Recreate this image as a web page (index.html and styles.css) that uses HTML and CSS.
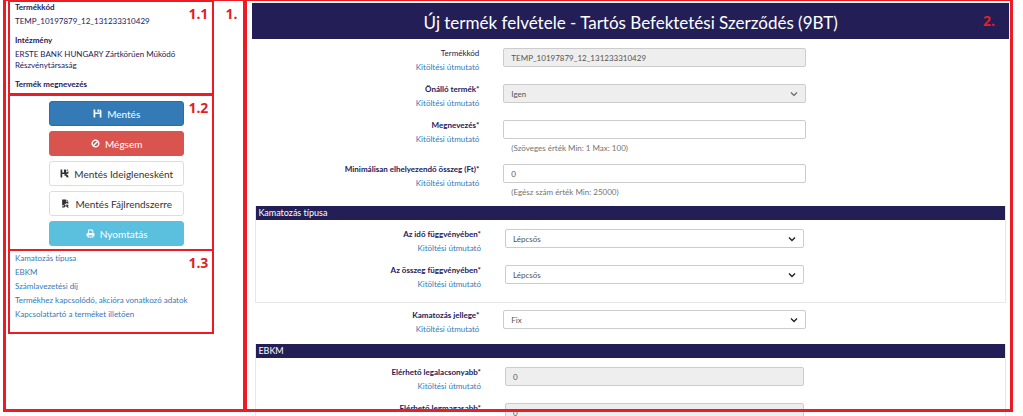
FILE: index.html
```html
<!DOCTYPE html>
<html lang="hu">
<head>
    <meta charset="UTF-8">
    <meta name="viewport" content="width=device-width, initial-scale=1.0">
    <title>Új termék felvétele</title>
    <link rel="stylesheet" href="styles.css">
</head>
<body>

<div class="page">
    <aside class="sidebar">
        <span class="mark mark-outer">1.</span>

        <div class="box">
            <span class="mark">1.1</span>
            <dl class="info">
                <dt>Termékkód</dt>
                <dd>TEMP_10197879_12_131233310429</dd>
                <dt>Intézmény</dt>
                <dd>ERSTE BANK HUNGARY Zártkörűen Működő Részvénytársaság</dd>
                <dt>Termék megnevezés</dt>
            </dl>
        </div>

        <div class="box box-actions">
            <span class="mark">1.2</span>
            <button type="button" class="btn btn-primary">
                <svg class="icon" viewBox="0 0 16 16"><path fill="currentColor" fill-rule="evenodd" d="M1 1h3v5h8V1h1l2 2v12h-3V9H4v6H1zM8 1h3v4H8z"/></svg>
                Mentés
            </button>
            <button type="button" class="btn btn-danger">
                <svg class="icon" viewBox="0 0 16 16"><g fill="none" stroke="currentColor" stroke-width="2.4"><circle cx="8" cy="8" r="6"/><path d="M4 12l8-8"/></g></svg>
                Mégsem
            </button>
            <button type="button" class="btn">
                <svg class="icon" viewBox="0 0 16 16"><path fill="currentColor" d="M1 1h3v5h3V1h3l1 1v4l4-2v4l-4 1 4 3-4 3v-3H8V9H4v6H1zM12 1h2v2h-2zM13 13h2v2h-2z"/></svg>
                Mentés Ideiglenesként
            </button>
            <button type="button" class="btn">
                <svg class="icon" viewBox="0 0 16 16"><path fill="currentColor" d="M2 1h7v4h4v4l-3-2-4 3 3 2-3 3H2v-2h3v-2H2zM10 1l3 3h-3zM10 9l4 3-2 .5 2 2.500h-3l-2-2z"/></svg>
                Mentés Fájlrendszerre
            </button>
            <button type="button" class="btn btn-info">
                <svg class="icon" viewBox="0 0 16 16"><path fill="currentColor" fill-rule="evenodd" d="M4 1h7l2 2v4h1l1 1v5h-2v2H3v-2H1V8l1-1h2zM5.500 2.500V7h6V4H10V2.500zM4.500 11v2.500h7V11z"/></svg>
                Nyomtatás
            </button>
        </div>

        <nav class="box box-links">
            <span class="mark">1.3</span>
            <a href="#kamatozas">Kamatozás típusa</a>
            <a href="#ebkm">EBKM</a>
            <a href="#dij">Számlavezetési díj</a>
            <a href="#akcio">Termékhez kapcsolódó, akcióra vonatkozó adatok</a>
            <a href="#kapcsolat">Kapcsolattartó a terméket illetően</a>
        </nav>
    </aside>

    <main class="main">
        <header class="title-bar">
            <h1>Új termék felvétele - Tartós Befektetési Szerződés (9BT)</h1>
            <span class="mark mark-title">2.</span>
        </header>

        <form class="product-form">
            <div class="row">
                <div class="row-label">
                    <label class="plain" for="code">Termékkód</label>
                    <a href="#">Kitöltési útmutató</a>
                </div>
                <div class="row-field">
                    <input type="text" id="code" value="TEMP_10197879_12_131233310429" disabled>
                </div>
            </div>

            <div class="row">
                <div class="row-label">
                    <label for="standalone">Önálló termék*</label>
                    <a href="#">Kitöltési útmutató</a>
                </div>
                <div class="row-field">
                    <select id="standalone" disabled>
                        <option>Igen</option>
                    </select>
                </div>
            </div>

            <div class="row">
                <div class="row-label">
                    <label for="name">Megnevezés*</label>
                    <a href="#">Kitöltési útmutató</a>
                </div>
                <div class="row-field">
                    <input type="text" id="name">
                    <p class="help">(Szöveges érték Min: 1 Max: 100)</p>
                </div>
            </div>

            <div class="row">
                <div class="row-label">
                    <label for="amount">Minimálisan elhelyezendő összeg (Ft)*</label>
                    <a href="#">Kitöltési útmutató</a>
                </div>
                <div class="row-field">
                    <input type="text" id="amount" value="0">
                    <p class="help">(Egész szám érték Min: 25000)</p>
                </div>
            </div>

            <section class="panel" id="kamatozas">
                <h2>Kamatozás típusa</h2>
                <div class="row">
                    <div class="row-label">
                        <label for="by-time">Az idő függvényében*</label>
                        <a href="#">Kitöltési útmutató</a>
                    </div>
                    <div class="row-field">
                        <select id="by-time">
                            <option>Lépcsős</option>
                        </select>
                    </div>
                </div>
                <div class="row">
                    <div class="row-label">
                        <label for="by-amount">Az összeg függvényében*</label>
                        <a href="#">Kitöltési útmutató</a>
                    </div>
                    <div class="row-field">
                        <select id="by-amount">
                            <option>Lépcsős</option>
                        </select>
                    </div>
                </div>
            </section>

            <div class="row">
                <div class="row-label">
                    <label for="kind">Kamatozás jellege*</label>
                    <a href="#">Kitöltési útmutató</a>
                </div>
                <div class="row-field">
                    <select id="kind">
                        <option>Fix</option>
                    </select>
                </div>
            </div>

            <section class="panel" id="ebkm">
                <h2>EBKM</h2>
                <div class="row">
                    <div class="row-label">
                        <label for="lowest">Elérhető legalacsonyabb*</label>
                        <a href="#">Kitöltési útmutató</a>
                    </div>
                    <div class="row-field">
                        <input type="text" id="lowest" value="0" disabled>
                    </div>
                </div>
                <div class="row">
                    <div class="row-label">
                        <label for="highest">Elérhető legmagasabb*</label>
                    </div>
                    <div class="row-field">
                        <input type="text" id="highest" value="0" disabled>
                    </div>
                </div>
            </section>
        </form>
    </main>
</div>

</body>
</html>
```

FILE: styles.css
```css
*,
*::after {
    box-sizing: border-box;
}

body {
    margin: 0;
    font-family: Lato, "Open Sans", sans-serif;
    font-size: 8px;
    font-variant-ligatures: none;
    line-height: 11px;
    color: #24205a;
    background-color: #fff;
}

a {
    color: #337ab7;
    text-decoration: none;
}

a:hover {
    text-decoration: underline;
}

.page {
    display: flex;
    height: 100vh;
    padding: 0 10px 0 3px;
    overflow: hidden;
}

/* red frames and numbers */
.mark {
    position: absolute;
    top: 3px;
    right: 4px;
    font-family: "Open Sans", sans-serif;
    font-size: 14px;
    font-weight: bold;
    line-height: 18px;
    color: #e01f26;
}

.mark-outer {
    right: 6px;
    top: 4px;
}

.mark-title {
    top: 9px;
    right: 14px;
}

/* sidebar */
.sidebar {
    position: relative;
    width: 24%;
    height: calc(100vh - 4px);
    padding: 0 29px 0 2px;
    border: 3px solid #ed1c24;
    border-top-width: 1px;
    border-right-width: 2px;
}

.box {
    position: relative;
    padding: 0 5px 3px;
    border: 2px solid #ed1c24;
    border-top-width: 1px;
}

.info {
    margin: 0;
}

.info dt {
    font-weight: bold;
}

.info dd {
    margin: 3px 0 8px;
    padding-right: 24px;
}

.box-actions {
    display: flex;
    flex-direction: column;
    align-items: center;
    gap: 5px;
    padding: 5px 28px 3px 39px;
}

.btn {
    display: flex;
    justify-content: center;
    align-items: center;
    gap: 5px;
    width: 100%;
    height: 25px;
    padding: 0;
    border: 1px solid #ddd;
    border-radius: 3px;
    background-color: #fff;
    color: #333;
    font-family: inherit;
    font-size: 10px;
    white-space: nowrap;
    cursor: pointer;
}

.btn-primary {
    background-color: #337ab7;
    border-color: #2e6da4;
    color: #fff;
}

.btn-danger {
    background-color: #d9534f;
    border-color: #d9534f;
    color: #fff;
}

.btn-info {
    background-color: #5bc0de;
    border-color: #5bc0de;
    color: #fff;
}

.icon {
    width: 9px;
    height: 9px;
}

.box-links {
    display: flex;
    flex-direction: column;
    margin-top: -1px;
    padding-bottom: 11px;
    line-height: 14px;
}

/* main */
.main {
    position: relative;
    flex: 1;
    padding: 3px 4px 0 7px;
}

.main::after {
    content: "";
    position: absolute;
    top: 0;
    left: 0;
    right: 0;
    height: calc(100vh - 4px);
    border: 3px solid #ed1c24;
    border-top-width: 1px;
    border-left-width: 2px;
    pointer-events: none;
}

.title-bar {
    position: relative;
    padding: 8px 0 4px;
    background-color: #231f56;
    color: #fff;
    text-align: center;
}

h1 {
    margin: 0;
    font-size: 17px;
    font-weight: normal;
    line-height: 24px;
}

.product-form {
    padding-top: 7px;
}

.row {
    display: grid;
    grid-template-columns: 30% 40%;
    column-gap: 24px;
    margin-bottom: 8px;
}

.row-label {
    display: flex;
    flex-direction: column;
    align-items: flex-end;
    line-height: 14px;
}

label {
    font-weight: bold;
}

.plain {
    font-weight: normal;
}

.row-field {
    padding-top: 2px;
}

input,
select {
    display: block;
    width: 100%;
    height: 19px;
    padding: 0 7px;
    border: 1px solid #ccc;
    border-radius: 2px;
    background-color: #fff;
    color: #555;
    font-family: inherit;
    font-size: 8px;
}

select {
    appearance: none;
    background-image: url("data:image/svg+xml,%3Csvg xmlns='http://www.w3.org/2000/svg' viewBox='0 0 8 8'%3E%3Cpath d='M1 2.500l3 3 3-3' fill='none' stroke='%23222' stroke-width='1.400'/%3E%3C/svg%3E");
    background-position: right 7px center;
    background-repeat: no-repeat;
    background-size: 8px 8px;
}

input:disabled,
select:disabled {
    background-color: #eee;
    color: #555;
    opacity: 1;
}

select:disabled {
    background-image: url("data:image/svg+xml,%3Csvg xmlns='http://www.w3.org/2000/svg' viewBox='0 0 8 8'%3E%3Cpath d='M1 2.500l3 3 3-3' fill='none' stroke='%23666' stroke-width='1.200'/%3E%3C/svg%3E");
}

.help {
    margin: 4px 8px 0;
    color: #737373;
}

.panel {
    margin: 5px 3px;
    padding-bottom: 3px;
    border: 1px solid #e8e8e8;
    border-top: none;
}

.panel h2 {
    margin: 0 0 7px;
    padding: 0 2px;
    background-color: #231f56;
    color: #fff;
    font-size: 9px;
    font-weight: normal;
    line-height: 14px;
}
```
